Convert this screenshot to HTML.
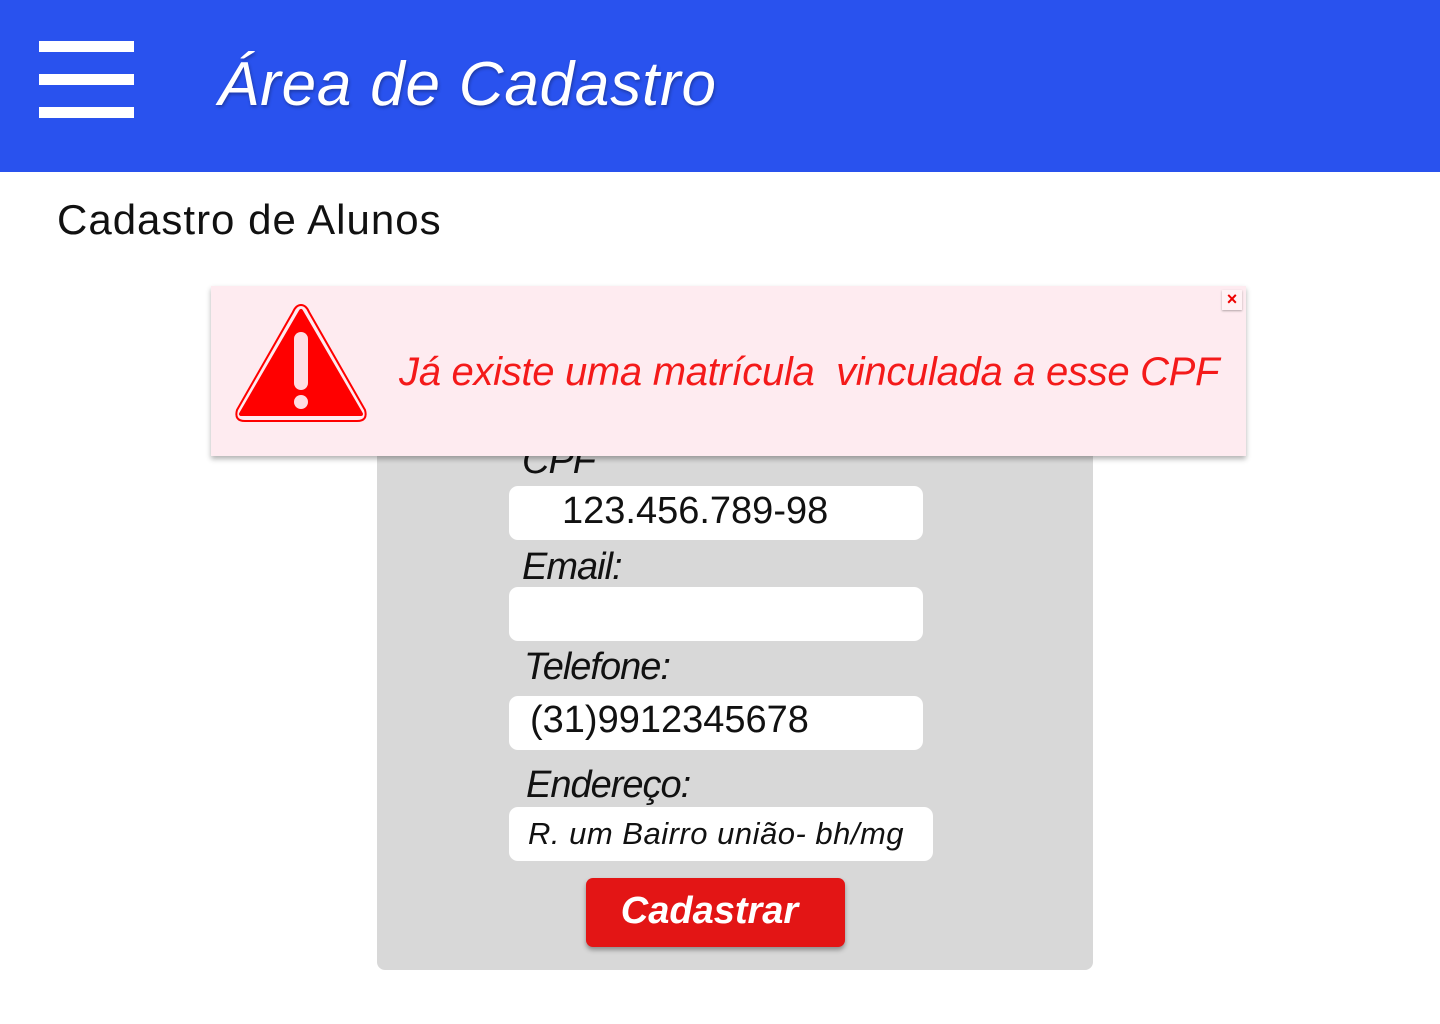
<!DOCTYPE html>
<html><head><meta charset="utf-8"><style>
body{margin:0;width:1440px;height:1024px;background:#fff;font-family:"Liberation Sans",sans-serif;position:relative;overflow:hidden}
.hdr{position:absolute;left:0;top:0;width:1440px;height:172px;background:#2952ee}
.bar{position:absolute;left:39px;width:95px;height:11px;background:#fff}
.title{position:absolute;left:218px;top:49px;font-size:62px;font-style:italic;color:#fff;letter-spacing:0.8px;text-shadow:1px 2px 3px rgba(0,0,0,.3)}
.sub{position:absolute;left:57px;top:196px;font-size:42px;color:#111;letter-spacing:1px}
.box{position:absolute;left:377px;top:380px;width:716px;height:590px;background:#d8d8d8;border-radius:8px}
.lbl{position:absolute;font-style:italic;font-size:38px;color:#111;letter-spacing:-1px}
.inp{position:absolute;left:509px;width:414px;height:54px;background:#fff;border-radius:9px}
.txt{position:absolute;font-size:38px;color:#111}
.btn{position:absolute;left:586px;top:878px;width:259px;height:69px;background:#e31515;border-radius:7px;box-shadow:0 3px 5px rgba(0,0,0,.35);color:#fff;font-weight:bold;font-style:italic;font-size:38px;text-align:center;line-height:66px;text-indent:-12px}
.alert{position:absolute;left:211px;top:286px;width:1035px;height:170px;background:#feebf0;box-shadow:0 3px 5px rgba(0,0,0,.3)}
.msg{position:absolute;left:188px;top:64px;font-size:40px;font-style:italic;color:#f41a1a;letter-spacing:-0.3px}
.x{position:absolute;right:4px;top:4px;width:20px;height:20px;background:#fff2f5;box-shadow:0 1px 2px rgba(0,0,0,.3);color:#e00;font-weight:bold;font-size:18px;text-align:center;line-height:19px}
</style></head><body>
<div class="hdr">
<div class="bar" style="top:41px"></div><div class="bar" style="top:74px"></div><div class="bar" style="top:107px"></div>
<div class="title">Área de Cadastro</div>
</div>
<div class="sub">Cadastro de Alunos</div>
<div class="box"></div>
<div class="lbl" style="left:522px;top:440px">CPF</div>
<div class="inp" style="top:486px"></div>
<div class="txt" style="left:562px;top:490px">123.456.789-98</div>
<div class="lbl" style="left:522px;top:546px">Email:</div>
<div class="inp" style="top:587px"></div>
<div class="lbl" style="left:524px;top:646px">Telefone:</div>
<div class="inp" style="top:696px"></div>
<div class="txt" style="left:530px;top:699px">(31)9912345678</div>
<div class="lbl" style="left:526px;top:764px">Endereço:</div>
<div class="inp" style="top:807px;width:424px"></div>
<div class="txt" style="left:528px;top:816px;font-size:31px;font-style:italic;letter-spacing:0.5px">R. um Bairro união- bh/mg</div>
<div class="btn">Cadastrar</div>
<div class="alert">
<svg style="position:absolute;left:22px;top:16px" width="136" height="122" viewBox="0 0 136 122">
<path d="M68 3 Q63 3 60 10 L4 108 Q1 119 12 119 L124 119 Q135 119 132 108 L76 10 Q73 3 68 3Z" fill="#feebf0" stroke="#f00" stroke-width="2"/>
<path d="M68 9 L8 112 L128 112 Z" fill="#f00" stroke="#f00" stroke-width="4" stroke-linejoin="round"/>
<rect x="61" y="30" width="14" height="58" rx="7" fill="#ffdde3"/>
<ellipse cx="68" cy="100" rx="7" ry="7" fill="#ffdde3"/>
</svg>
<div class="msg">Já existe uma matrícula&nbsp; vinculada a esse CPF</div>
<div class="x">×</div>
</div>
</body></html>
